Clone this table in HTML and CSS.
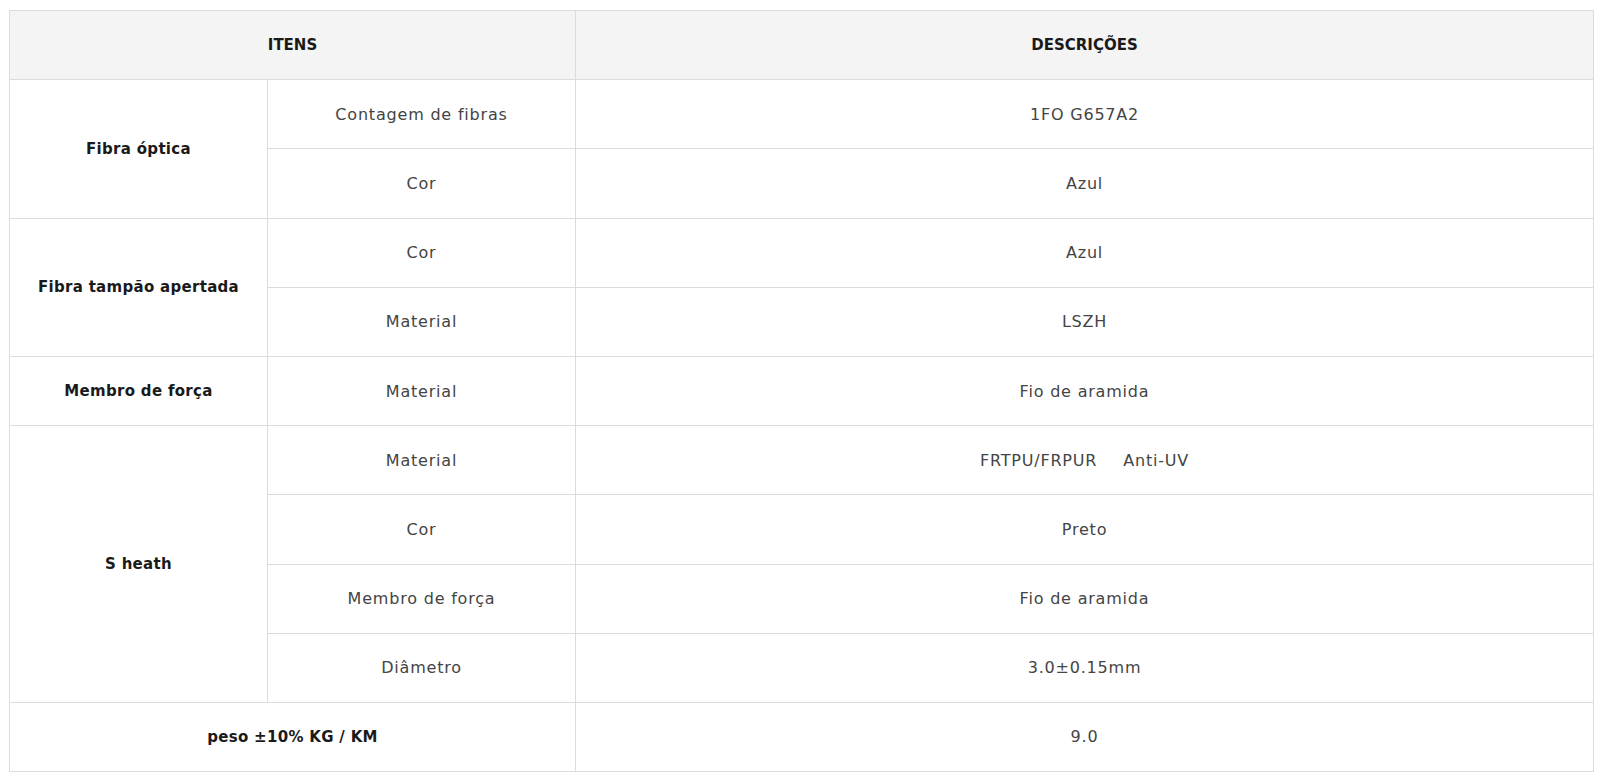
FILE: index.html
```html
<!DOCTYPE html>
<html lang="pt">
<head>
<meta charset="utf-8">
<title>Especificações</title>
<link rel="stylesheet" href="styles.css">
</head>
<body>
<table class="spec">
  <colgroup>
    <col class="c1">
    <col class="c2">
    <col class="c3">
  </colgroup>
  <thead>
    <tr><th colspan="2">ITENS</th><th>DESCRIÇÕES</th></tr>
  </thead>
  <tbody>
    <tr><td rowspan="2" class="item">Fibra óptica</td><td>Contagem de fibras</td><td>1FO G657A2</td></tr>
    <tr><td>Cor</td><td>Azul</td></tr>
    <tr><td rowspan="2" class="item">Fibra tampão apertada</td><td>Cor</td><td>Azul</td></tr>
    <tr><td>Material</td><td>LSZH</td></tr>
    <tr><td class="item">Membro de força</td><td>Material</td><td>Fio de aramida</td></tr>
    <tr><td rowspan="4" class="item">S heath</td><td>Material</td><td>FRTPU/FRPUR<span class="gap"></span>Anti-UV</td></tr>
    <tr><td>Cor</td><td>Preto</td></tr>
    <tr><td>Membro de força</td><td>Fio de aramida</td></tr>
    <tr><td>Diâmetro</td><td>3.0±0.15mm</td></tr>
    <tr><td colspan="2" class="item">peso ±10% KG / KM</td><td>9.0</td></tr>
  </tbody>
</table>
</body>
</html>
```
FILE: styles.css
```css
html, body {
  margin: 0;
  padding: 0;
  background: #fff;
}
body {
  padding: 10px 0 0 9px;
  font-family: "DejaVu Sans", "Open Sans", sans-serif;
  font-size: 16px;
  letter-spacing: 0.8px;
  color: #444;
}
.spec {
  border-collapse: collapse;
  width: 1585px;
  table-layout: fixed;
}
.c1 { width: 258px; }
.c2 { width: 308px; }
.spec th,
.spec td {
  border: 1px solid #dcdcdc;
  text-align: center;
  vertical-align: middle;
  height: 69.2px;
  padding: 0 8px;
  box-sizing: border-box;
}
.spec th {
  background: #f4f4f4;
  font-weight: 700;
  font-size: 15px;
  letter-spacing: 0;
  color: #1a1a1a;
}
.spec td.item {
  font-weight: 700;
  font-size: 15px;
  letter-spacing: 0.3px;
  color: #1a1a1a;
}
.gap {
  display: inline-block;
  width: 26px;
}
```
